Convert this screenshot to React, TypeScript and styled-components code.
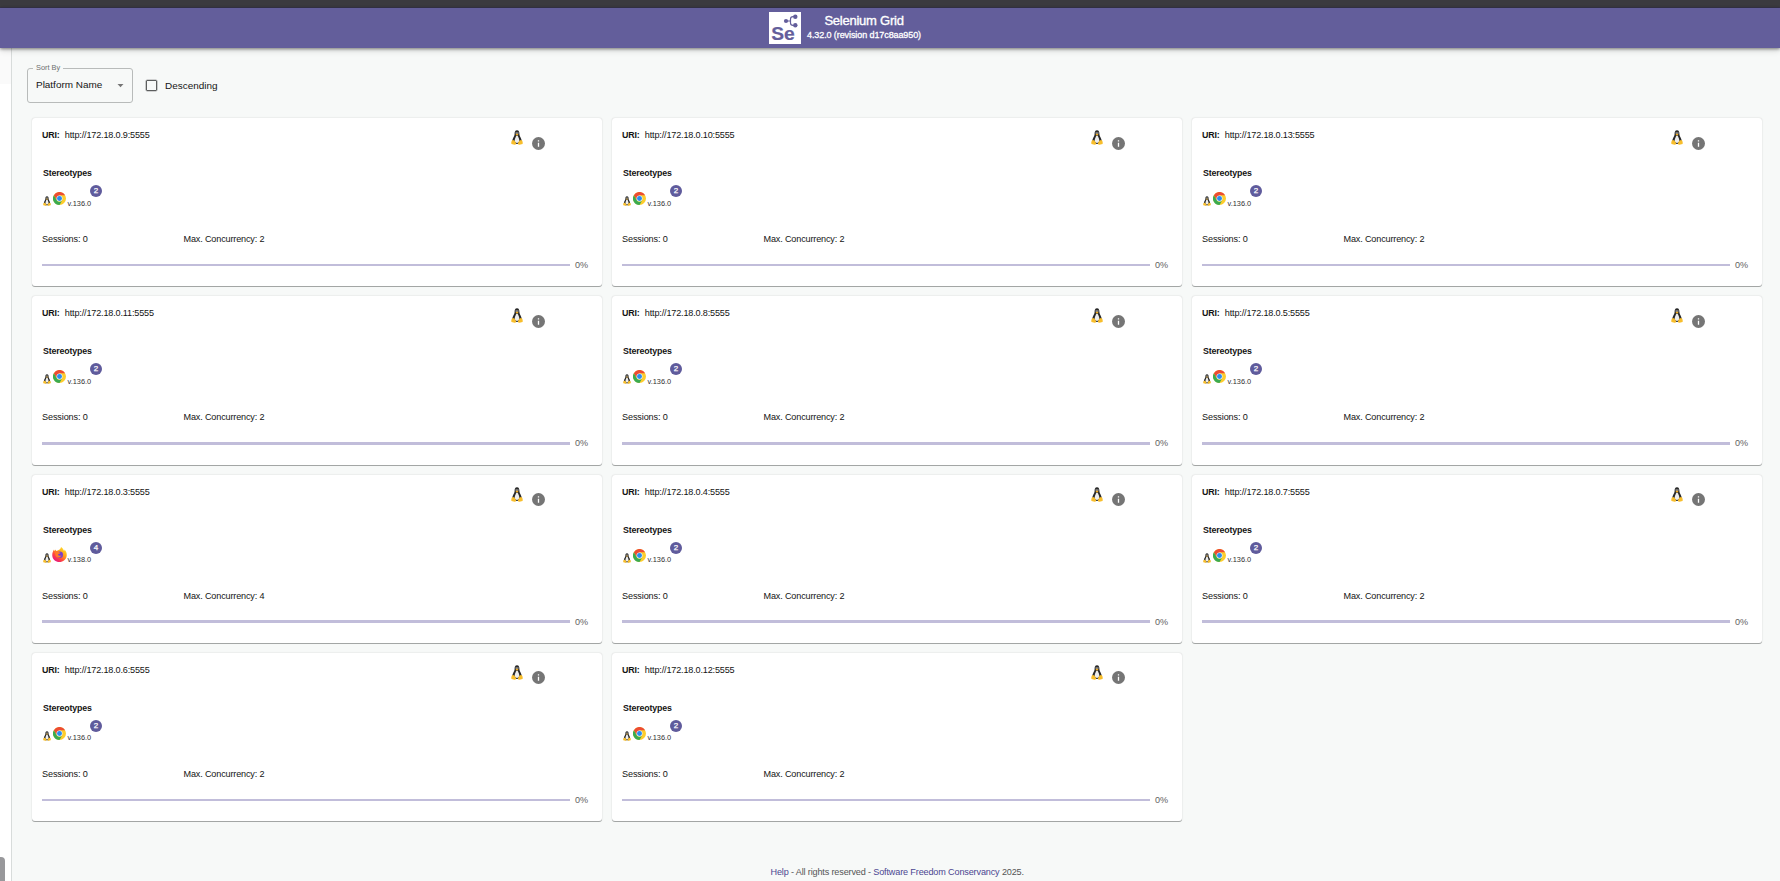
import React from "react";
import styled, { createGlobalStyle } from "styled-components";

const Global = createGlobalStyle`
  * { box-sizing: border-box; }
  body { margin: 0; background: #f7f9f8; overflow: hidden; }
`;

const Page = styled.div`
  height: 881px;
  display: flex;
  flex-direction: column;
  font-family: "Liberation Sans", Arial, sans-serif;
  font-size: 9.1px;
  letter-spacing: -0.17px;
  color: #141414;
  background: #f7f9f8;
  white-space: nowrap;
`;
const WindowEdge = styled.div`
  height: 8px;
  background: #3b3a3f;
  border-bottom: 1px solid #37344a;
`;
const AppBar = styled.header`
  height: 40px;
  flex: none;
  display: flex;
  padding: 4px 0 0 769px;
  background: #635e9b;
  color: #fff;
  box-shadow: 0 1px 3px rgba(0, 0, 0, 0.45), 0 3px 6px rgba(0, 0, 0, 0.12);
  z-index: 1;
`;
const TitleBlock = styled.div`
  width: 114px;
  margin-left: 6px;
  display: flex;
  flex-direction: column;
  align-items: center;
`;
const Title = styled.h1`
  margin: 0;
  font-size: 13px;
  line-height: 17px;
  font-weight: 400;
  letter-spacing: -0.24px;
  -webkit-text-stroke: 0.35px #fff;
`;
const Revision = styled.div`
  font-size: 9px;
  line-height: 12px;
  letter-spacing: -0.09px;
  -webkit-text-stroke: 0.3px #fff;
`;
const Body = styled.div`
  flex: 1;
  min-height: 0;
  display: flex;
`;
const Drawer = styled.aside`
  width: 12px;
  flex: none;
  display: flex;
  flex-direction: column;
  justify-content: space-between;
  background: #fff;
  border-right: 1px solid #d8dcdb;
`;
const DrawerTop = styled.div`
  height: 36px;
  background: #fafafa;
`;
const ScrollThumb = styled.div`
  width: 5px;
  height: 24px;
  border-radius: 0 4px 0 0;
  background: #98989b;
`;
const Main = styled.main`
  flex: 1;
  display: flex;
  flex-direction: column;
`;
const Toolbar = styled.div`
  height: 70px;
  display: flex;
  align-items: flex-start;
  padding: 20px 0 0 15px;
  font-size: 9.95px;
  letter-spacing: 0;
`;
const Select = styled.fieldset`
  width: 106px;
  height: 35px;
  margin: 0;
  padding: 0 8px;
  border: 1px solid #b8bbba;
  border-radius: 3px;
  position: relative;
  display: flex;
  align-items: center;
  justify-content: space-between;
  line-height: 32px;
`;
const SelectValue = styled.span`
  padding-bottom: 1px;
`;
const SelectLabel = styled.span`
  position: absolute;
  left: 5px;
  top: -7px;
  padding: 0 3px;
  font-size: 7.4px;
  line-height: 12px;
  color: #6d6f6f;
  background: #f7f9f8;
`;
const Checkbox = styled.span`
  width: 11px;
  height: 11px;
  margin: 12px 8px 0 13px;
  border: 1px solid #5c5e5e;
  border-radius: 1px;
  box-shadow: 0 0 0 0.3px #5c5e5e;
`;
const CheckLabel = styled.span`
  line-height: 14px;
  margin-top: 11px;
`;
const Grid = styled.section`
  display: grid;
  grid-template-columns: repeat(3, 570px);
  grid-auto-rows: 168.33px;
  gap: 10px;
  padding-left: 20px;
`;
const Card = styled.article`
  padding: 0 10px;
  background: #fff;
  border-radius: 3px;
  box-shadow: 0 1px 0 #a3a6a5, 0 0 1.5px rgba(0, 0, 0, 0.22);
`;
const CardHead = styled.div`
  display: flex;
  height: 45px;
  padding-top: 11px;
  line-height: 12px;
`;
const Uri = styled.div`
  width: 469px;
  display: flex;
  gap: 5.3px;
`;
const Strong = styled.b`
  font-size: 8.9px;
`;
const TuxSlot = styled.div`
  width: 12px;
  margin-top: 1px;
`;
const InfoSlot = styled.div`
  margin: 7.5px 0 0 9px;
  height: 13px;
`;
const Heading = styled.div`
  height: 26px;
  padding: 4px 0 0 1px;
  line-height: 12px;
  font-weight: 700;
  font-size: 8.8px;
  letter-spacing: -0.14px;
`;
const Stereotype = styled.div`
  height: 42px;
  display: flex;
  padding-left: 1px;
`;
const SmallTux = styled.span`
  display: flex;
  padding-top: 7px;
  width: 10px;
`;
const BrowserSlot = styled.span<{ $wide?: boolean }>`
  display: flex;
  padding-top: ${(p) => (p.$wide ? 1 : 3)}px;
  margin-left: ${(p) => (p.$wide ? -1 : 0)}px;
  width: ${(p) => (p.$wide ? 15.5 : 14.5)}px;
`;
const Version = styled.span`
  width: 22.5px;
  padding-top: 8.5px;
  font-size: 7.4px;
  line-height: 12px;
  letter-spacing: 0;
  color: #303030;
`;
const Count = styled.span`
  width: 12px;
  height: 12px;
  margin-top: -4px;
  border-radius: 6px;
  background: #5f5b9c;
  color: #fff;
  font-size: 8px;
  line-height: 12px;
  letter-spacing: 0;
  text-align: center;
  -webkit-text-stroke: 0.25px #fff;
`;
const Stats = styled.div`
  display: flex;
  height: 28px;
  padding-top: 2px;
  line-height: 12px;
`;
const Sessions = styled.span`
  width: 141.5px;
  letter-spacing: -0.12px;
`;
const Concurrency = styled.span`
  letter-spacing: -0.16px;
`;
const Load = styled.div`
  display: flex;
  align-items: center;
  gap: 5px;
  height: 12px;
  color: #626262;
`;
const Track = styled.div`
  width: 528px;
  height: 2.4px;
  background: #c1bdda;
`;
const Footer = styled.footer`
  margin-top: auto;
  height: 15px;
  padding-left: 758.5px;
  line-height: 12px;
  letter-spacing: -0.15px;
  color: #555;
`;
const FooterLink = styled.a`
  color: #4b4691;
`;

const SeleniumLogo = () => (
  <svg width="32" height="32" viewBox="0 0 32 32">
    <rect width="32" height="32" fill="#fff" />
    <g fill="#635e9b">
      <path d="M17 9H21.500M26 4.700H24Q21.500 4.700 21.500 7V11Q21.500 13.300 24 13.300H26" fill="none" stroke="#635e9b" strokeWidth="1.200" />
      <circle cx="17" cy="9" r="2.100" />
      <circle cx="26.300" cy="4.700" r="2.200" />
      <circle cx="26.300" cy="13.300" r="2.200" />
    </g>
    <text x="2.300" y="28" fontSize="18" fontWeight="700" fill="#635e9b" stroke="#635e9b" strokeWidth="0.200" letterSpacing="0" textLength="23.500" lengthAdjust="spacingAndGlyphs">Se</text>
  </svg>
);

const Tux = ({ w, h }: { w: number; h: number }) => (
  <svg width={w} height={h} viewBox="0 0 24 29" preserveAspectRatio="none">
    <path d="M12 .5C8 .5 7 4 7.200 8C7.200 12 3 15 2.500 21C2.300 26 7 27 12 27S22 26 21.500 21C21 15 16.800 12 16.800 8C17 4 16 .5 12 .5Z" fill="#292929" />
    <path d="M12 10.500C9.500 11 9.500 14 8 17C6.500 21 7.500 25 12 25S17.500 21 16 17C14.500 14 14.500 11 12 10.500Z" fill="#ededed" />
    <ellipse cx="10.300" cy="6" rx="1.200" ry="1.600" fill="#ddd" />
    <ellipse cx="13.800" cy="6" rx="1.200" ry="1.600" fill="#ddd" />
    <path d="M9 8.500L12 7L15 8.500L12 11Z" fill="#f3ae22" />
    <path d="M3.500 19.500L7 20.500L10 25Q10.500 29 7 28.500L1 27Q-.2 25 1.500 21ZM20.500 19.500L17 20.500L14 25Q13.500 29 17 28.500L23 27Q24.200 25 22.500 21Z" fill="#f8be2c" />
  </svg>
);

const Info = () => (
  <svg width="13" height="13" viewBox="0 0 13 13">
    <circle cx="6.500" cy="6.500" r="6.500" fill="#757575" />
    <path d="M5.850 3.200H7.150V4.500H5.850ZM5.850 5.850H7.150V9.800H5.850Z" fill="#fff" />
  </svg>
);

const Chrome = () => (
  <svg width="13" height="13" viewBox="0 0 26 26">
    <circle cx="13" cy="13" r="13" fill="#fdcd2b" />
    <path d="M1.700 6.500A13 13 0 0 1 24.300 6.500H13L7.400 16.200Z" fill="#ec4c33" />
    <path d="M1.700 6.500L7.400 16.250A6.500 6.500 0 0 0 18.630 16.250L13 26A13 13 0 0 1 1.700 6.500Z" fill="#3aab50" />
    <circle cx="13" cy="13" r="6" fill="#e8f2fb" />
    <circle cx="13" cy="13" r="4.900" fill="#2a8cf0" />
  </svg>
);

const Firefox = () => (
  <svg width="15" height="15" viewBox="0 0 30 30">
    <defs>
      <linearGradient id="flame" x1="0.85" y1="0.1" x2="0.2" y2="0.95">
        <stop offset="0" stopColor="#ffe226" />
        <stop offset="0.4" stopColor="#ff9a1c" />
        <stop offset="0.7" stopColor="#ff4340" />
        <stop offset="1" stopColor="#e31587" />
      </linearGradient>
    </defs>
    <path d="M18 0C22 3 23 5 24 8C25 8 25 6 25 5C28 8 30 12 29.500 17C29 25 22 30 15 30C7 30 1 25 .5 17C.3 12 2 8 4 5L5 8L8 5L8 8C13 6 17 6 18 0Z" fill="url(#flame)" />
    <circle cx="15.500" cy="15.500" r="6.500" fill="#7540cf" />
    <path d="M5 9C9 7 12 8 14 10.500L17 11.500C16 14 13 13 12 15.500C13 18 16 18.500 19 16.500C17 22 9 23 7 17Z" fill="#ff7a28" />
  </svg>
);

interface GridNode {
  ip: string;
  firefox?: boolean;
}

const nodes: GridNode[] = [
  { ip: "172.18.0.9" },
  { ip: "172.18.0.10" },
  { ip: "172.18.0.13" },
  { ip: "172.18.0.11" },
  { ip: "172.18.0.8" },
  { ip: "172.18.0.5" },
  { ip: "172.18.0.3", firefox: true },
  { ip: "172.18.0.4" },
  { ip: "172.18.0.7" },
  { ip: "172.18.0.6" },
  { ip: "172.18.0.12" },
];

const NodeCard = ({ ip, firefox }: GridNode) => {
  const slots = firefox ? 4 : 2;
  return (
    <Card>
      <CardHead>
        <Uri>
          <Strong>URI:</Strong>
          <span>http://{ip}:5555</span>
        </Uri>
        <TuxSlot>
          <Tux w={12} h={15} />
        </TuxSlot>
        <InfoSlot>
          <Info />
        </InfoSlot>
      </CardHead>
      <Heading>Stereotypes</Heading>
      <Stereotype>
        <SmallTux>
          <Tux w={8} h={10} />
        </SmallTux>
        <BrowserSlot $wide={firefox}>{firefox ? <Firefox /> : <Chrome />}</BrowserSlot>
        <Version>{firefox ? "v.138.0" : "v.136.0"}</Version>
        <Count>{slots}</Count>
      </Stereotype>
      <Stats>
        <Sessions>Sessions: 0</Sessions>
        <Concurrency>Max. Concurrency: {slots}</Concurrency>
      </Stats>
      <Load>
        <Track />
        <span>0%</span>
      </Load>
    </Card>
  );
};

export default function App() {
  return (
    <Page>
      <Global />
      <WindowEdge />
      <AppBar>
        <SeleniumLogo />
        <TitleBlock>
          <Title>Selenium Grid</Title>
          <Revision>4.32.0 (revision d17c8aa950)</Revision>
        </TitleBlock>
      </AppBar>
      <Body>
        <Drawer>
          <DrawerTop />
          <ScrollThumb />
        </Drawer>
        <Main>
          <Toolbar>
            <Select>
              <SelectLabel>Sort By</SelectLabel>
              <SelectValue>Platform Name</SelectValue>
              <svg width="7" height="4" viewBox="0 0 7 4">
                <path d="M0.500 0H6.500L3.500 3.300Z" fill="#757575" />
              </svg>
            </Select>
            <Checkbox />
            <CheckLabel>Descending</CheckLabel>
          </Toolbar>
          <Grid>
            {nodes.map((n) => (
              <NodeCard key={n.ip} {...n} />
            ))}
          </Grid>
          <Footer>
            <FooterLink>Help</FooterLink> - All rights reserved - <FooterLink>Software Freedom Conservancy</FooterLink> 2025.
          </Footer>
        </Main>
      </Body>
    </Page>
  );
}
